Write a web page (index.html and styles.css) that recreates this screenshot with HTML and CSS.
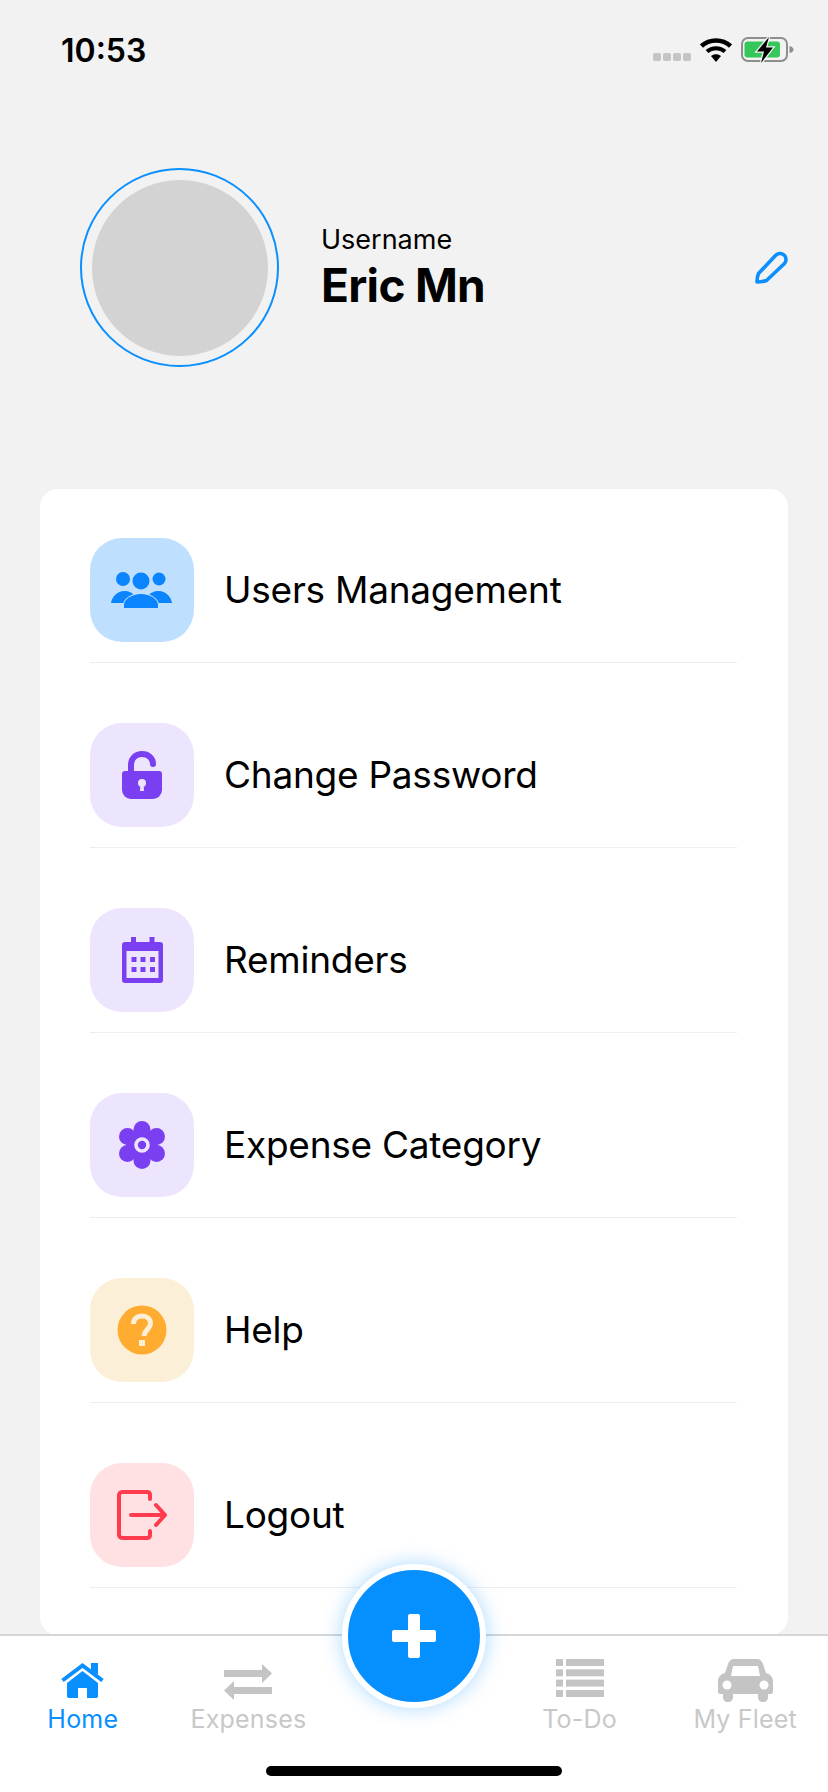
FILE: index.html
```html
<!DOCTYPE html>
<html lang="en">
<head>
 <meta charset="UTF-8">
 <meta name="viewport" content="width=device-width, initial-scale=1.0">
 <title>Profile</title>
 <link rel="stylesheet" href="styles.css">
</head>
<body>
 <div class="screen">
  <div class="status-bar">
   <span class="time">10:53</span>
   <div class="status-icons">
    <div class="signal"><i></i><i></i><i></i><i></i></div>
    <svg class="wifi" width="32" height="25" viewBox="0 0 32 25">
     <path d="M1.500 9C9.500 1.500 22.500 1.500 30.500 9" fill="none" stroke="#000" stroke-width="4.500"/>
     <path d="M7 14.500C12 10 20 10 25 14.500" fill="none" stroke="#000" stroke-width="4"/>
     <path d="M11 19L16 25L21 19C18 16.500 14 16.500 11 19z" fill="#000"/>
    </svg>
    <svg class="battery" width="53" height="26" viewBox="0 0 53 26">
     <rect x="1" y="1" width="45" height="23" rx="6" fill="none" stroke="#8e8e8e" stroke-width="2"/>
     <rect x="3.500" y="4.500" width="35.500" height="16" rx="3" fill="#34c759"/>
     <path d="M48.500 9c2.500 .5 4 2 4 3.500s-1.500 3-4 3.500z" fill="#8e8e8e"/>
     <path d="M28 0L16 14.500h7L20 26L32 10.500h-7z" fill="#000" stroke="#f2f2f2" stroke-width="2.500" paint-order="stroke"/>
    </svg>
   </div>
  </div>

  <div class="profile">
   <div class="avatar-ring"><div class="avatar"></div></div>
   <div class="profile-text">
    <div class="profile-label">Username</div>
    <div class="profile-name">Eric Mn</div>
   </div>
   <svg class="edit" width="34" height="34" viewBox="0 0 34 34">
    <path d="M4.500 22.500L21.500 4.500a6 6 0 0 1 9 8L12.500 29.500Q8 31 3 31Q3 26 4.500 22.500z" fill="none" stroke="#0a8fff" stroke-width="3.600" stroke-linejoin="round"/>
   </svg>
  </div>

  <div class="menu-card">
   <div class="menu-row">
    <div class="menu-icon icon-blue">
     <svg width="62" height="36" viewBox="0 0 62 36" fill="#0a84ff">
      <circle cx="12" cy="7" r="7"/><circle cx="30" cy="9" r="8.500"/><circle cx="48" cy="7" r="6.500"/>
      <path d="M0 31C1 24 7 19 13 19C18 19 22 21 24 24L14 31z"/>
      <path d="M61 31C60 24 54 19 48 19C43 19 39 21 37 24L47 31z"/>
      <path d="M13 36V33C13 27 21 22 30 22S47 27 47 33V36z" stroke="#bfdfff" stroke-width="2" paint-order="stroke"/>
     </svg>
    </div>
    <span class="menu-label">Users Management</span>
   </div>
   <div class="menu-row">
    <div class="menu-icon icon-purple">
     <svg width="40" height="48" viewBox="0 0 40 48">
      <path d="M9 21V14C9 7 14 3 20 3C26 3 31 7 31 13" fill="none" stroke="#7b3ff2" stroke-width="6" stroke-linecap="round"/>
      <path d="M3 20H37a3 3 0 0 1 3 3V39a9 9 0 0 1-9 9H9a9 9 0 0 1-9-9V23a3 3 0 0 1 3-3z" fill="#7b3ff2"/>
      <circle cx="20" cy="32" r="4" fill="#ede5fe"/>
      <path d="M18.500 33h3l.5 7h-4z" fill="#ede5fe"/>
     </svg>
    </div>
    <span class="menu-label">Change Password</span>
   </div>
   <div class="menu-row">
    <div class="menu-icon icon-purple">
     <svg width="41" height="46" viewBox="0 0 41 46">
      <path d="M9 0h5v5h13.500V0h5v5h5.500a3 3 0 0 1 3 3v35a3 3 0 0 1-3 3H3a3 3 0 0 1-3-3V8a3 3 0 0 1 3-3h6z" fill="#7b3ff2"/>
      <rect x="4.500" y="14" width="32" height="27" fill="#ede5fe"/>
      <g fill="#7b3ff2">
       <rect x="9.500" y="20" width="5" height="5"/><rect x="18.500" y="20" width="5" height="5"/><rect x="28" y="20" width="5" height="5"/>
       <rect x="9.500" y="30" width="5" height="5"/><rect x="18.500" y="30" width="5" height="5"/><rect x="28" y="30" width="5" height="5"/>
      </g>
     </svg>
    </div>
    <span class="menu-label">Reminders</span>
   </div>
   <div class="menu-row">
    <div class="menu-icon icon-purple">
     <svg width="46" height="48" viewBox="0 0 46 48">
      <g fill="#7b3ff2">
       <circle cx="23" cy="8.500" r="8.500"/><circle cx="23" cy="39.500" r="8.500"/>
       <circle cx="8.500" cy="15.500" r="8.500"/><circle cx="37.500" cy="15.500" r="8.500"/>
       <circle cx="8.500" cy="32.500" r="8.500"/><circle cx="37.500" cy="32.500" r="8.500"/>
       <circle cx="23" cy="24" r="16"/>
      </g>
      <circle cx="23" cy="24" r="6" fill="none" stroke="#ede5fe" stroke-width="3.600"/>
     </svg>
    </div>
    <span class="menu-label">Expense Category</span>
   </div>
   <div class="menu-row">
    <div class="menu-icon icon-orange">
     <svg width="50" height="50" viewBox="0 0 50 50">
      <circle cx="25" cy="25" r="24.500" fill="#ffac30"/>
      <path d="M16.500 19C16.500 14 20 11 25 11C30 11 33.500 14 33.500 18.500C33.500 24 27.500 24.500 27 31" fill="none" stroke="#fcefd7" stroke-width="5"/>
      <rect x="22" y="35" width="6" height="6" fill="#fcefd7"/>
     </svg>
    </div>
    <span class="menu-label">Help</span>
   </div>
   <div class="menu-row">
    <div class="menu-icon icon-red">
     <svg width="50" height="50" viewBox="0 0 50 50" fill="none" stroke="#ff3b4e" stroke-width="4" stroke-linecap="round" stroke-linejoin="round">
      <path d="M33 9V5C33 3 32 2 30 2H6C4 2 2 3 2 5V45C2 47 4 48 6 48H30C32 48 33 47 33 45V41"/>
      <path d="M14 25H48M39 15L48 25L39 35"/>
     </svg>
    </div>
    <span class="menu-label">Logout</span>
   </div>
  </div>

  <div class="tab-bar">
   <div class="tab tab-active">
    <div class="tab-icon">
     <svg width="43" height="35" viewBox="0 0 43 35" fill="#0a8fff">
      <path d="M21.500 8L6 20V33C6 34.500 7 35 8 35H17V25H26V35H35C36 35 37 34.500 37 33V20z"/>
      <path d="M1.500 17.500L21.500 2.500L41.500 17.500" fill="none" stroke="#0a8fff" stroke-width="4"/>
      <path d="M30 0h7v12l-7-5z"/>
     </svg>
    </div>
    <span class="tab-label">Home</span>
   </div>
   <div class="tab">
    <div class="tab-icon">
     <svg class="icon-low" width="48" height="36" viewBox="0 0 48 36" fill="#c4c4c4">
      <path d="M0 6H38V0L48 9.500L38 19V13H0z"/>
      <path d="M48 23H10V17L0 26.500L10 36V30H48z"/>
     </svg>
    </div>
    <span class="tab-label">Expenses</span>
   </div>
   <div class="tab"></div>
   <div class="tab">
    <div class="tab-icon">
     <svg class="icon-high" width="48" height="38" viewBox="0 0 48 38" fill="#c4c4c4">
      <rect x="0" y="0" width="7" height="7"/><rect x="10" y="0" width="38" height="7"/>
      <rect x="0" y="10.300" width="7" height="7"/><rect x="10" y="10.300" width="38" height="7"/>
      <rect x="0" y="20.600" width="7" height="7"/><rect x="10" y="20.600" width="38" height="7"/>
      <rect x="0" y="31" width="7" height="7"/><rect x="10" y="31" width="38" height="7"/>
     </svg>
    </div>
    <span class="tab-label">To-Do</span>
   </div>
   <div class="tab">
    <div class="tab-icon">
     <svg width="55" height="43" viewBox="0 0 55 43">
      <path d="M16 0H39C42 0 44 2 45 5L48 14C52 15 55 18 55 22V33C55 34 54 35 53 35H50V38C50 41 48 43 45 43C42 43 40 41 40 38V35H15V38C15 41 13 43 10 43C7 43 5 41 5 38V35H2C1 35 0 34 0 33V22C0 18 3 15 7 14L10 5C11 2 13 0 16 0z" fill="#c4c4c4"/>
      <path d="M15 7H40L42 17H13z" fill="#fff"/>
      <circle cx="9" cy="26" r="4.500" fill="#fff"/><circle cx="46" cy="26" r="4.500" fill="#fff"/>
     </svg>
    </div>
    <span class="tab-label">My Fleet</span>
   </div>
   <button class="fab" type="button">
    <svg width="44" height="44" viewBox="0 0 44 44" fill="#fff">
     <rect x="0" y="16" width="44" height="12" rx="2"/>
     <rect x="16" y="0" width="12" height="44" rx="2"/>
    </svg>
   </button>
   <div class="home-indicator"></div>
  </div>
 </div>
</body>
</html>
```

FILE: styles.css
```css
body {
 margin: 0;
 font-family: 'Inter', 'Liberation Sans', sans-serif;
 background-color: #f2f2f2;
 color: #000;
}
.screen {
 width: 828px;
 height: 1792px;
 display: flex;
 flex-direction: column;
 overflow: hidden;
}
.status-bar {
 height: 88px;
 flex: none;
 display: flex;
 justify-content: space-between;
 align-items: flex-start;
 padding: 0 34px 0 61px;
}
.time {
 font-size: 32px;
 line-height: 38px;
 font-weight: 600;
 margin-top: 32px;
}
.status-icons {
 display: flex;
 align-items: flex-start;
 margin-top: 37px;
}
.signal {
 display: flex;
 gap: 2px;
 margin-top: 16px;
 margin-right: 9px;
}
.signal i {
 width: 8px;
 height: 8px;
 border-radius: 2px;
 background-color: #c4c4c4;
}
.wifi {
 margin-right: 9px;
}
.profile {
 flex: none;
 height: 321px;
 margin-top: 80px;
 display: flex;
 align-items: flex-start;
 padding: 0 40px 0 80px;
}
.avatar-ring {
 width: 199px;
 height: 199px;
 box-sizing: border-box;
 border: 2px solid #0a8fff;
 border-radius: 50%;
 display: flex;
 align-items: center;
 justify-content: center;
}
.avatar {
 width: 176px;
 height: 176px;
 border-radius: 50%;
 background-color: #d3d3d3;
}
.profile-text {
 margin-left: 42px;
 margin-top: 56px;
 flex: 1;
}
.profile-label {
 font-size: 27px;
 line-height: 32px;
}
.profile-name {
 font-size: 46px;
 line-height: 54px;
 font-weight: 700;
 letter-spacing: -0.7px;
 margin-top: 2px;
}
.edit {
 margin-top: 83px;
}
.menu-card {
 flex: none;
 box-sizing: border-box;
 height: 1146px;
 margin: 0 40px;
 padding: 49px 51px 0 50px;
 background-color: #fff;
 border-radius: 18px;
}
.menu-row {
 height: 125px;
 margin-bottom: 60px;
 box-sizing: border-box;
 border-bottom: 1px solid #eee;
 display: flex;
 align-items: flex-start;
}
.menu-icon {
 width: 104px;
 height: 104px;
 flex: none;
 border-radius: 32px;
 display: flex;
 align-items: center;
 justify-content: center;
}
.icon-blue { background-color: #bfdfff; }
.icon-purple { background-color: #ede5fe; }
.icon-orange { background-color: #fcefd7; }
.icon-red { background-color: #ffe1e4; }
.menu-label {
 font-size: 37px;
 line-height: 104px;
 letter-spacing: -0.25px;
 margin-left: 30px;
}
.tab-bar {
 flex: 1;
 position: relative;
 z-index: 1;
 margin-top: -1px;
 background-color: #fff;
 border-top: 2px solid #d6d6d8;
 display: grid;
 grid-template-columns: repeat(5, 1fr);
}
.tab {
 display: flex;
 flex-direction: column;
 align-items: center;
 height: 98px;
 justify-content: flex-end;
}
.tab-icon {
 height: 46px;
 margin-bottom: 1px;
 display: flex;
 align-items: center;
}
.icon-low { margin-top: 4px; }
.icon-high { margin-bottom: 4px; }
.tab-label {
 font-size: 25px;
 line-height: 30px;
 letter-spacing: 0.2px;
 color: #c8c8c8;
}
.tab-active .tab-label {
 color: #0a8fff;
}
.fab {
 position: absolute;
 left: 342px;
 top: -72px;
 width: 144px;
 height: 144px;
 box-sizing: border-box;
 padding: 0;
 border: 6px solid #fff;
 border-radius: 50%;
 background-color: #058fff;
 box-shadow: 0 0 20px rgba(10, 143, 255, 0.35);
 display: flex;
 align-items: center;
 justify-content: center;
}
.home-indicator {
 position: absolute;
 left: 266px;
 bottom: 16px;
 width: 296px;
 height: 10px;
 border-radius: 5px;
 background-color: #000;
}
```
